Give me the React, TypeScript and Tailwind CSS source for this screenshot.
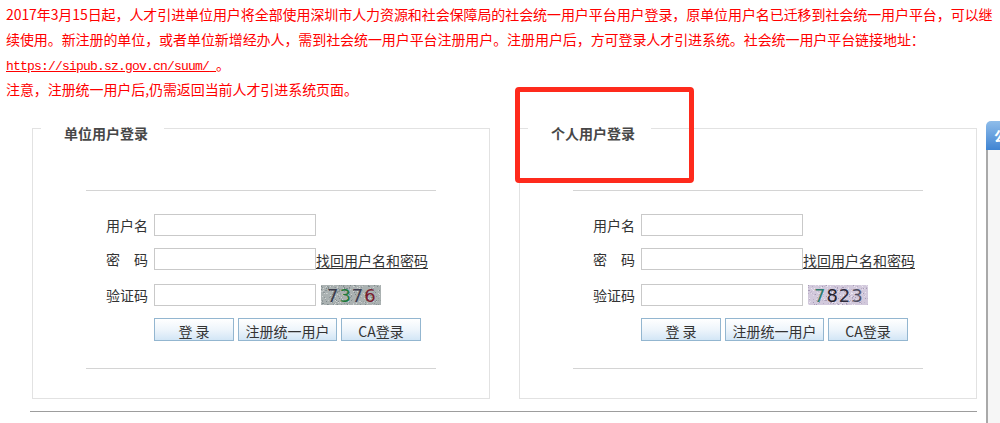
import React from 'react';

const FONT = { fontFamily: '"Noto Sans CJK SC", "Microsoft YaHei", sans-serif' };

type Digit = { ch: string; color: string };

const makeNoise = (seed: number, palette: string[]) => {
  let s = seed;
  const rnd = () => {
    s = (s * 9301 + 49297) % 233280;
    return s / 233280;
  };
  const dots: { x: number; y: number; c: string }[] = [];
  for (let i = 0; i < 260; i++) {
    dots.push({ x: Math.floor(rnd() * 60), y: Math.floor(rnd() * 20), c: palette[Math.floor(rnd() * palette.length)] });
  }
  return dots;
};

const Captcha = ({ digits, bg, palette, seed }: { digits: Digit[]; bg: string; palette: string[]; seed: number }) => {
  const dots = makeNoise(seed, palette);
  return (
    <svg width="60" height="20" viewBox="0 0 60 20" className="ml-[5px] shrink-0">
      <rect width="60" height="20" fill={bg} />
      {dots.map((d, i) => (
        <rect key={i} x={d.x} y={d.y} width="1" height="1" fill={d.c} />
      ))}
      {digits.map((d, i) => (
        <text key={i} x={6 + i * 12.4} y="17" fontSize="18" fontFamily="DejaVu Sans, sans-serif" fill={d.color}>
          {d.ch}
        </text>
      ))}
    </svg>
  );
};

const Field = ({ label, children }: { label: string; children?: React.ReactNode }) => (
  <div className="flex items-center h-[22px]">
    <span className="w-[42px] text-right text-[14px] leading-[22px] text-[#333] whitespace-pre">{label}</span>
    <input className="ml-[6px] w-[162px] h-[22px] border border-[#c9c9c9] bg-white outline-none" />
    {children}
  </div>
);

const Btn = ({ children, w }: { children: React.ReactNode; w: string }) => (
  <button
    className={`${w} h-[23px] border border-[#93b6d0] bg-linear-to-b from-white via-[#eef5fb] to-[#d3e6f6] text-[14px] leading-[21px] text-[#333] pt-[2px]`}
  >
    {children}
  </button>
);

const LoginPanel = ({ title, captcha }: { title: string; captcha: React.ReactNode }) => (
  <fieldset className="flex-1 border border-[#e2e2e2] h-[286px]">
    <legend className="ml-[8px] pl-[23px] pr-[16px] pt-[10px] text-[14px] leading-[20px] font-bold text-[#474747]">
      {title}
    </legend>
    <div className="mx-[53px] mt-[47px] border-t border-[#d4d4d4]" />
    <div className="pl-[73px] pt-[23px] flex flex-col">
      <Field label="用户名" />
      <div className="mt-[12px]">
        <Field label={'密\u3000码'}>
          <a href="#" className="text-[14px] leading-[20px] text-[#333] underline underline-offset-2 self-end">
            找回用户名和密码
          </a>
        </Field>
      </div>
      <div className="mt-[14px]">
        <Field label="验证码">{captcha}</Field>
      </div>
      <div className="mt-[12px] ml-[48px] flex gap-[4px]">
        <Btn w="w-[80px]">登 录</Btn>
        <Btn w="w-[99px]">注册统一用户</Btn>
        <Btn w="w-[80px]">CA登录</Btn>
      </div>
    </div>
    <div className="mx-[53px] mt-[27px] border-t border-[#d4d4d4]" />
  </fieldset>
);

export default function App() {
  return (
    <div className="relative w-[1000px] h-[423px] overflow-hidden bg-white" style={FONT}>
      <p className="px-[6px] pt-[2px] text-[14px] leading-[25px] text-[#f00] whitespace-nowrap tracking-[-0.08px]">
        2017年3月15日起，人才引进单位用户将全部使用深圳市人力资源和社会保障局的社会统一用户平台用户登录，原单位用户名已迁移到社会统一用户平台，可以继
        <br />
        续使用。新注册的单位，或者单位新增经办人，需到社会统一用户平台注册用户。注册用户后，方可登录人才引进系统。社会统一用户平台链接地址：
        <br />
        <a
          href="#"
          className="underline text-[#f00] text-[13px] leading-[10px] tracking-[-0.8px]"
          style={{ fontFamily: '"Liberation Mono", monospace' }}
        >
          https://sipub.sz.gov.cn/suum/{' '}
        </a>
        {' '}。
        <br />
        注意，注册统一用户后,仍需返回当前人才引进系统页面。
      </p>

      <div className="ml-[32px] mt-[11px] w-[945px] flex gap-[29px]">
        <LoginPanel
          title="单位用户登录"
          captcha={
            <Captcha
              seed={17}
              bg="#aab1b1"
              palette={['#8c9598', '#c4c9ca', '#7f8a8c', '#d0d4d3', '#9aa3a2']}
              digits={[
                { ch: '7', color: '#3b3b4b' },
                { ch: '3', color: '#1f7a3c' },
                { ch: '7', color: '#3f3f52' },
                { ch: '6', color: '#7b1d2f' },
              ]}
            />
          }
        />
        <LoginPanel
          title="个人用户登录"
          captcha={
            <Captcha
              seed={53}
              bg="#d2c9dc"
              palette={['#b9aec6', '#e2dbe9', '#a89cb6', '#ece6f1', '#c3b8cf']}
              digits={[
                { ch: '7', color: '#2d7b6b' },
                { ch: '8', color: '#25222c' },
                { ch: '2', color: '#2e2c3e' },
                { ch: '3', color: '#505064' },
              ]}
            />
          }
        />
      </div>

      <div className="ml-[30px] mt-[12px] w-[947px] border-t border-[#9d9d9d]" />

      {/* annotation box */}
      <div className="absolute left-[515px] top-[87px] w-[179px] h-[96px] border-[5px] border-[#fe2a1c] rounded-[4px]" />

      {/* floating side panel cut off at the right edge */}
      <div className="absolute left-[986px] top-[121px] w-[40px] h-[320px] flex flex-col">
        <div className="h-[29px] rounded-tl-[5px] bg-linear-to-b from-[#8fbdea] to-[#3f84d2] text-white text-[14px] leading-[29px] pl-[8px] font-bold">
          公告
        </div>
        <div className="flex-1 border-l-2 border-[#a9a9a9] bg-[#f6f6f6]" />
      </div>
    </div>
  );
}
